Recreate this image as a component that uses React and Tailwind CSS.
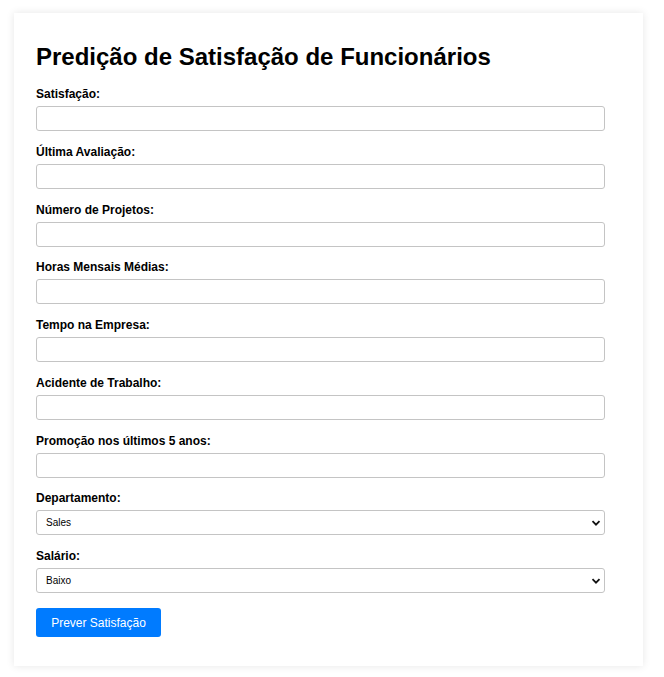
const fields = [
  'Satisfação:',
  'Última Avaliação:',
  'Número de Projetos:',
  'Horas Mensais Médias:',
  'Tempo na Empresa:',
  'Acidente de Trabalho:',
  'Promoção nos últimos 5 anos:',
]

const Chevron = () => (
  <svg width="10" height="10" viewBox="0 0 10 10" className="pointer-events-none absolute right-[4px] top-1/2 -translate-y-1/2">
    <path d="M1.5 3.2 L5 6.7 L8.5 3.2" fill="none" stroke="#111" strokeWidth="1.8" />
  </svg>
)

const SelectField = ({ label, value }) => (
  <div className="mb-[13.75px]">
    <label className="block text-[12px] font-bold leading-[14px] mb-[5px] text-black">{label}</label>
    <div className="relative w-[569px]">
      <div className="h-[25px] rounded-[3px] border border-[#c4c4c4] bg-white pl-[9px] text-[10px] leading-[23px] text-black">
        {value}
      </div>
      <Chevron />
    </div>
  </div>
)

export default function App() {
  return (
    <div className="min-h-[677px] bg-white pt-[13px] pl-[14px] font-['Liberation_Sans',Arial,sans-serif]">
      <div className="w-[629px] h-[653px] bg-white shadow-[0_0_8px_rgba(0,0,0,0.1)] pl-[22px] pt-[30px]">
        <h1 className="text-[24px] font-bold leading-[28px] text-black mb-[16px]">
          Predição de Satisfação de Funcionários
        </h1>
        {fields.map((f) => (
          <div key={f} className="mb-[13.75px]">
            <label className="block text-[12px] font-bold leading-[14px] mb-[5px] text-black">{f}</label>
            <input type="text" className="block w-[569px] h-[25px] rounded-[3px] border border-[#c4c4c4] bg-white outline-none" />
          </div>
        ))}
        <SelectField label="Departamento:" value="Sales" />
        <SelectField label="Salário:" value="Baixo" />
        <button className="mt-[1.5px] h-[29px] w-[125px] rounded-[3px] bg-[#007bff] text-[12px] text-white">
          Prever Satisfação
        </button>
      </div>
    </div>
  )
}
